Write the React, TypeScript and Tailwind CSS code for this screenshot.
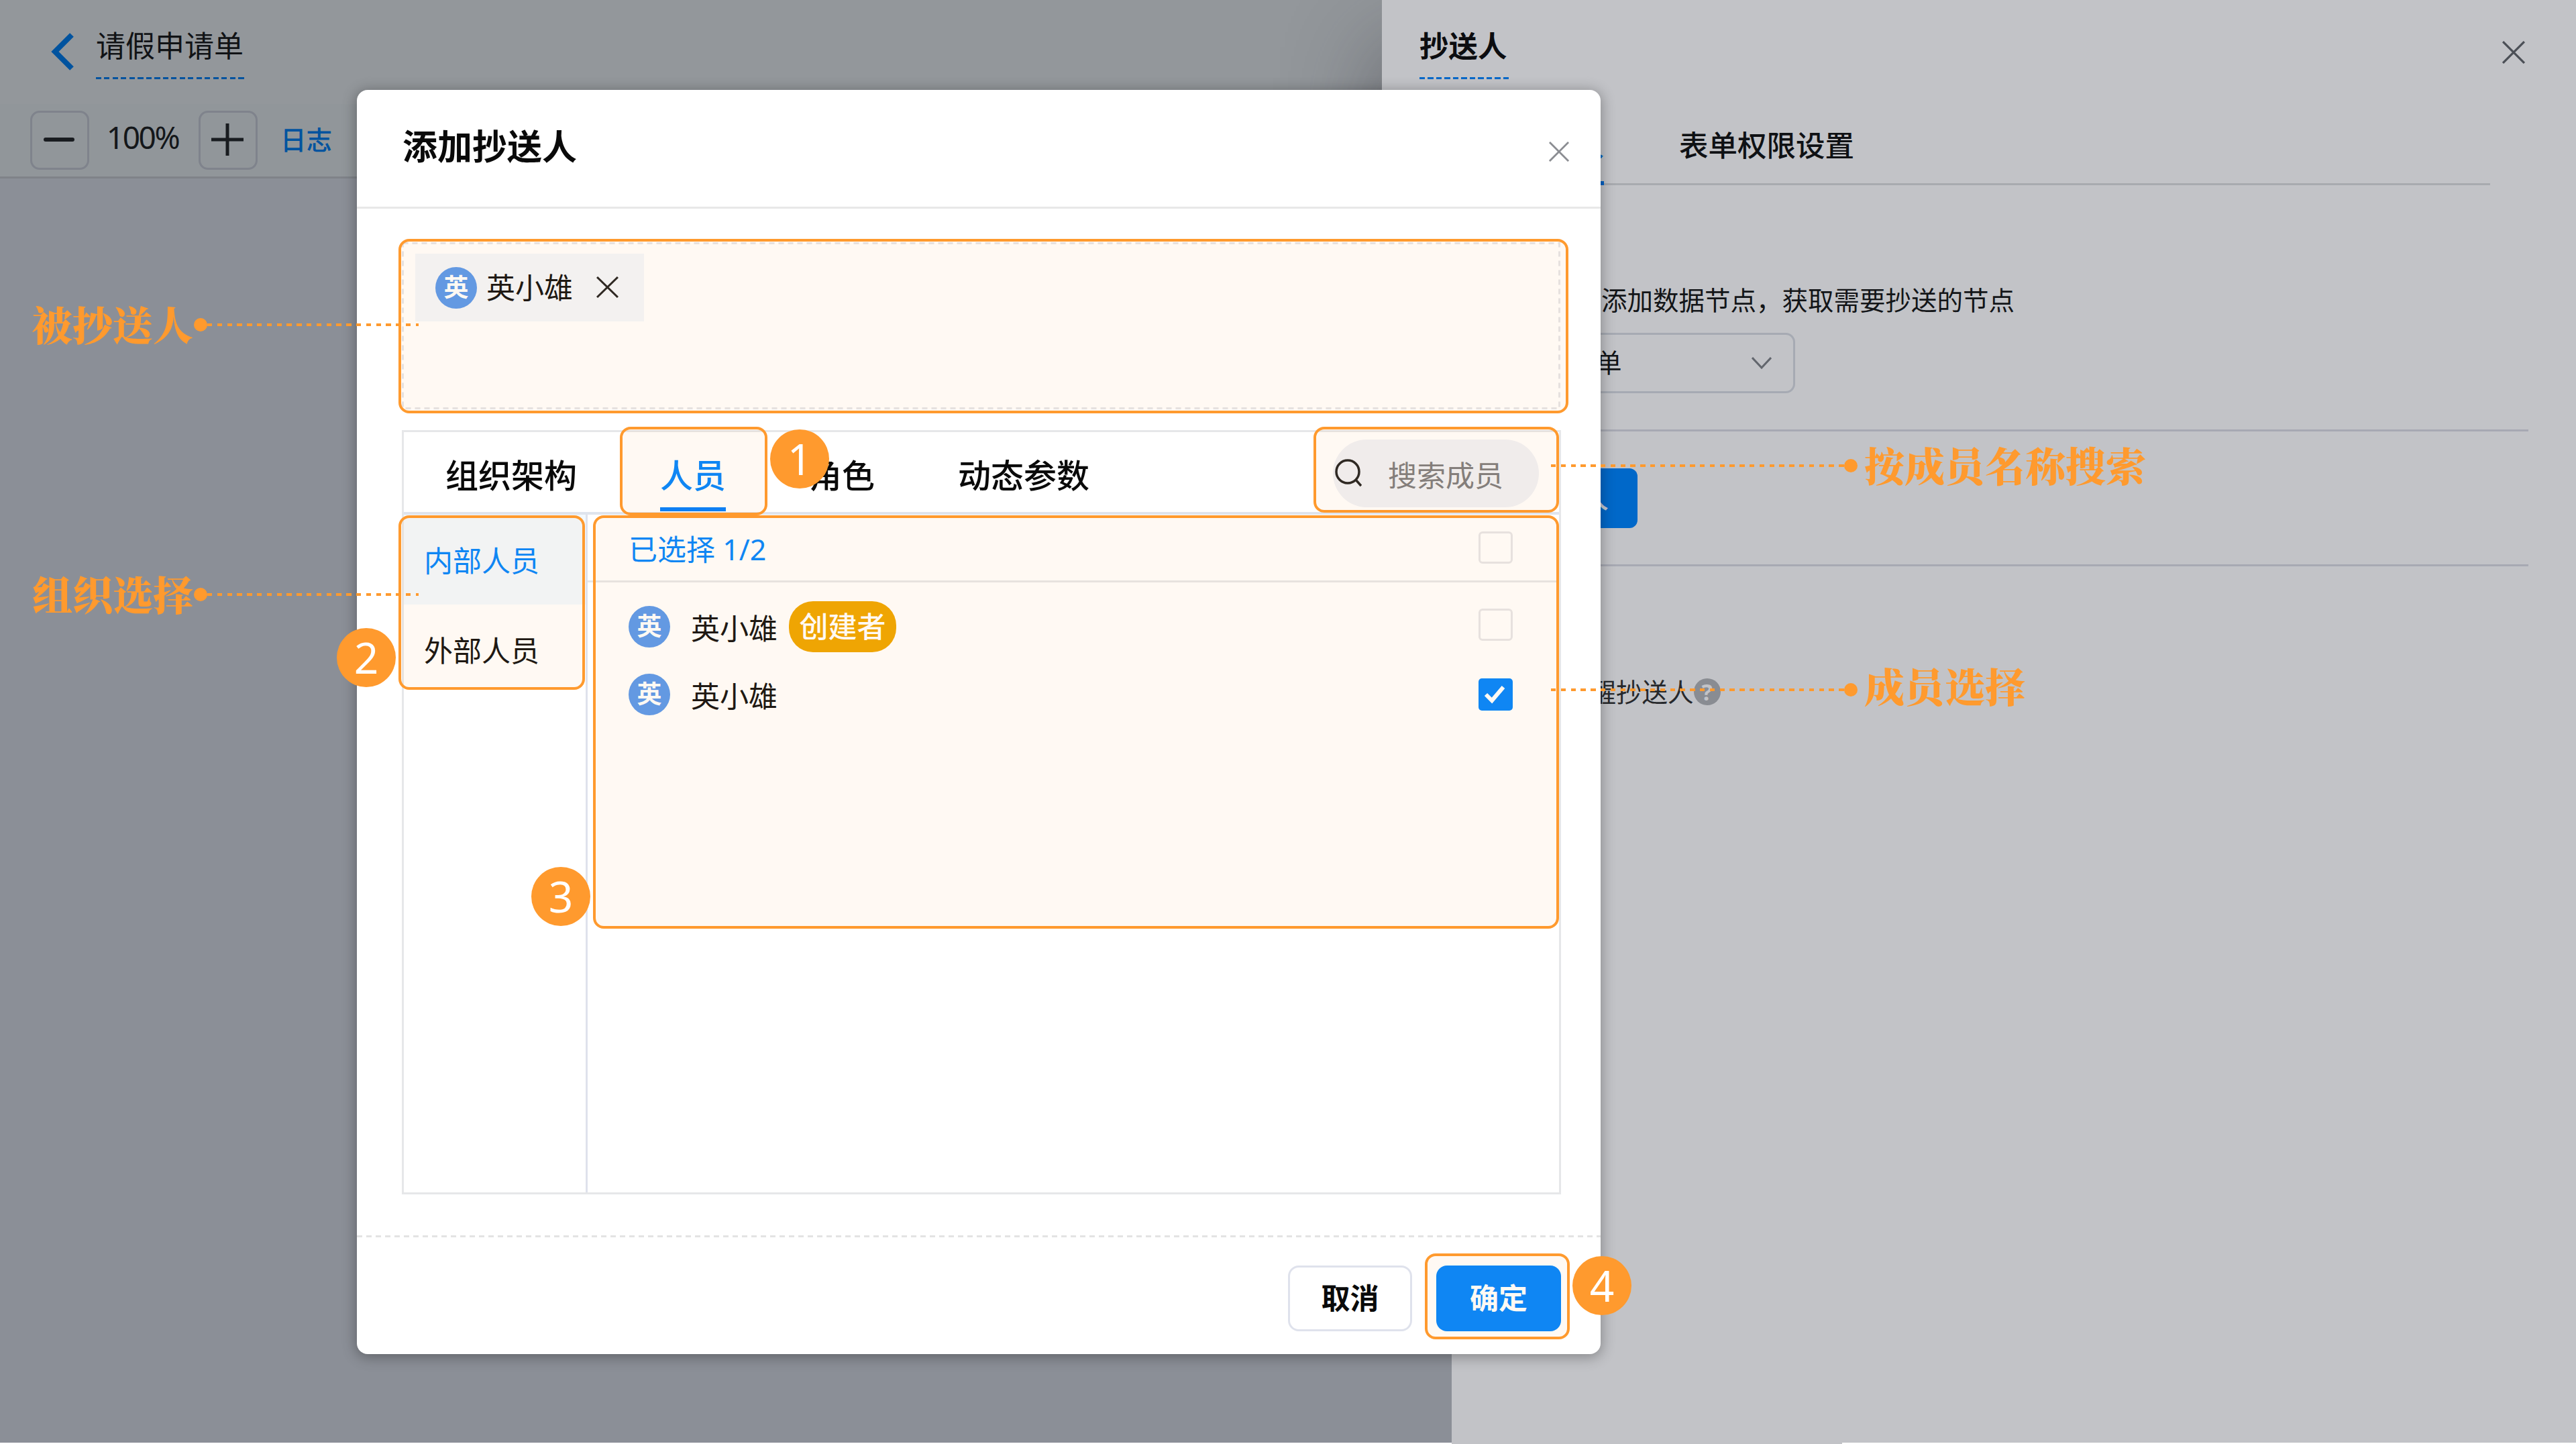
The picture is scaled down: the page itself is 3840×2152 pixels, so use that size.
import React from 'react'
import clsx from 'clsx'

interface Member {
  name: string
  creator?: boolean
  checked?: boolean
}

interface HighlightProps {
  className: string
}

interface CalloutProps {
  label: string
  side: 'left' | 'right'
  className: string
  labelClassName?: string
}

const tabs = ['组织架构', '人员', '角色', '动态参数']

const members: Member[] = [
  { name: '英小雄', creator: true },
  { name: '英小雄', checked: true },
]

function CrossIcon({ className }: { className: string }) {
  return (
    <svg viewBox="0 0 32 32" preserveAspectRatio="none" fill="none" stroke="currentColor" strokeWidth="3" className={className}>
      <path d="M1 1 31 31M31 1 1 31" />
    </svg>
  )
}

function Avatar() {
  return (
    <span className="flex h-[62px] w-[62px] shrink-0 items-center justify-center rounded-full bg-[#5a99ed] pb-[2px] text-[37px] leading-none font-bold text-white">
      英
    </span>
  )
}

function Checkbox({ checked }: { checked?: boolean }) {
  if (checked) {
    return (
      <span className="flex h-12 w-[51px] items-center justify-center rounded-[5px] bg-[#0085ff]">
        <svg viewBox="0 0 51 48" fill="none" stroke="#fff" strokeWidth="6" className="h-12 w-[51px]">
          <path d="M11 24 20 33 37 13" />
        </svg>
      </span>
    )
  }
  return <span className="h-12 w-[51px] rounded-[6px] border-[3px] border-[#e6e6e9]" />
}

function Page() {
  return (
    <div className="flex h-[2150px] w-full flex-col bg-[#8b8f97]">
      <div className="flex h-[155px] items-start bg-[#93979b] pl-[75px]">
        <svg viewBox="0 0 36 56" fill="none" stroke="#00539f" strokeWidth="8" className="mt-[49px] h-14 w-9">
          <path d="M32 3 7 28 32 53" />
        </svg>
        <div className="mt-[38px] ml-[32px]">
          <div className="text-[44px] leading-[60px] text-[#111316]">请假申请单</div>
          <div className="mt-[17px] h-[3px] w-[221px] bg-[repeating-linear-gradient(90deg,#00539f_0_8px,transparent_8px_12.5px)]" />
        </div>
      </div>
      <div className="flex h-[111px] items-center border-b-[3px] border-[#7f8389] bg-[#91969a] pl-[45px]">
        <div className="flex h-[88px] w-[88px] items-center justify-center rounded-[14px] border-[3px] border-[#7f838c] pr-[2px] pb-[2px]">
          <span className="h-[6px] w-[46px] rounded-full bg-[#191c20]" />
        </div>
        <div className="w-[163px] pr-[4px] pb-[10px] text-center text-[46px] leading-none tracking-[-2.4px] text-[#14171a]">100%</div>
        <div className="flex h-[88px] w-[88px] items-center justify-center rounded-[14px] border-[3px] border-[#7f838c] pr-[3px] pb-[3px]">
          <svg viewBox="0 0 48 48" stroke="#191c20" strokeWidth="5" className="h-12 w-12">
            <path d="M0 24H48M24 0V48" />
          </svg>
        </div>
        <div className="ml-[34px] pb-[2px] text-[38.5px] leading-none font-medium text-[#00539f]">日志</div>
      </div>
    </div>
  )
}

function Drawer() {
  return (
    <div className="absolute top-0 right-0 flex h-[2152px] w-[1780px] flex-col items-end">
      <div className="flex h-[1500px] w-full flex-col bg-[#c2c3c7] shadow-[-4px_70px_130px_rgba(40,40,48,0.45)]">
        <div className="flex h-[155px] items-start justify-between pr-[76px] pl-[56px]">
          <div className="mt-[38px]">
            <div className="text-[43.5px] leading-[60px] font-bold text-[#0c0d10]">抄送人</div>
            <div className="mt-[17px] h-[3px] w-[133px] bg-[repeating-linear-gradient(90deg,#0068c9_0_8px,transparent_8px_12.5px)]" />
          </div>
          <CrossIcon className="mt-[61px] h-[34px] w-[34px] text-[#4b4f56]" />
        </div>

        {/* Settings tabs */}
        <div className="mr-[128px] ml-[56px] flex h-[121px] items-start border-b-[3px] border-[#a8aaaf] text-[43.5px] leading-[60px] font-medium">
          <div className="flex h-[121px] w-[275px] flex-col border-b-[6px] border-[#0062c4]">
            <span className="pt-[31px] text-right text-[#0062c4]">抄送人</span>
          </div>
          <span className="mt-[31px] ml-[112px] text-[#0f1114]">表单权限设置</span>
        </div>

        <div className="mr-[71px] ml-[56px] flex h-[367px] flex-col border-b-[3px] border-[#a7a9b3] text-[38.5px] text-[#131518]">
          <div className="mt-[144px] flex h-[56px] w-[887px] items-center justify-end whitespace-nowrap">添加数据节点，获取需要抄送的节点</div>
          <div className="mt-[20px] flex h-[90px] w-[560px] items-center rounded-[14px] border-[3px] border-[#a6aab3] pr-[32px] pl-[106px]">
            <span className="flex-1">请假申请单</span>
            <svg viewBox="0 0 30 18" fill="none" stroke="#62666d" strokeWidth="3" className="h-[18px] w-[30px]">
              <path d="M1 1 15 16 29 1" />
            </svg>
          </div>
        </div>

        <div className="mr-[71px] ml-[56px] flex h-[201px] items-start border-b-[3px] border-[#a7a9b3]">
          <div className="mt-[55px] flex h-[89px] w-[325px] items-center justify-end rounded-[12px] bg-[#0068c9] pr-[43px] text-[43px] font-medium text-[#c3c8d0]">
            人
          </div>
        </div>

        <div className="mt-[166px] ml-[272px] flex h-[42px] items-center text-[38.5px] leading-none text-[#26282b]">
          <span>提醒抄送人</span>
          <span className="flex h-10 w-10 items-center justify-center rounded-full bg-[#898c92] text-[34px] leading-none font-bold text-[#c2c3c7]">
            ?
          </span>
        </div>
      </div>
      <div className="h-[650px] w-[1676px] bg-[#c2c3c7]" />
      <div className="mr-[1094px] h-[2px] w-[582px] bg-[#c2c3c7]" />
    </div>
  )
}

function SelectedMembers() {
  return (
    <div className="relative flex h-[249px] items-start pt-[17px] pl-[20px]">
      <svg className="absolute inset-0 h-full w-full" fill="none">
        <rect x="1.5" y="1.5" width="1724" height="246" stroke="#e5e6ea" strokeWidth="3" strokeDasharray="8 6" />
      </svg>
      <div className="relative flex h-[101px] w-[341px] items-center bg-[#f3f7fc] pl-[30px]">
        <Avatar />
        <span className="ml-[14px] text-[43px] leading-none text-[#111]">英小雄</span>
        <CrossIcon className="mb-[2px] ml-[35px] h-[32px] w-[33px] text-[#222]" />
      </div>
    </div>
  )
}

function MemberPicker() {
  return (
    <div className="mt-[31px] flex h-[1139px] flex-col border-[3px] border-[#e6e7e9]">
      <div className="flex h-[123px] shrink-0 border-b-4 border-[#dfe4ed] pl-[62px]">
        {tabs.map((tab) => (
          <div key={tab} className="mr-[124px] flex w-max flex-col pt-[34px]">
            <span className={clsx('text-[49px] leading-[60px] font-medium', tab === '人员' ? 'text-[#0085ff]' : 'text-[#0a0a0a]')}>
              {tab}
            </span>
            <span className={clsx('mt-[18px] h-[6px]', tab === '人员' && 'bg-[#007eff]')} />
          </div>
        ))}
        <div className="mt-[11px] mr-[30px] ml-auto flex h-[101px] w-[307px] items-center rounded-full bg-[#f0f2f7] pl-[3px]">
          <svg viewBox="0 0 40 42" fill="none" stroke="#222" strokeWidth="3.5" className="mb-[2px] h-[42px] w-[40px]">
            <circle cx="19" cy="19" r="17" />
            <path d="M31 31 39 40" />
          </svg>
          <span className="ml-[39px] pt-[5px] text-[43px] leading-none text-[#7d7d80]">搜索成员</span>
        </div>
      </div>

      <div className="flex flex-1">
        {/* Organisation list */}
        <div className="flex w-[274px] flex-col border-r-[3px] border-[#dfe2ec] text-[43px] leading-none">
          <div className="flex h-[134px] items-center bg-[#f2f9ff] pt-[2px] pl-[30px] text-[#0085ff]">内部人员</div>
          <div className="flex h-[137px] items-center pl-[30px] text-[#111]">外部人员</div>
        </div>

        <div className="flex flex-1 flex-col text-[43px] leading-none">
          <div className="flex h-[101px] items-center justify-between border-b-[3px] border-[#e6e7e9] pr-[69px] pl-[61px]">
            <span className="pt-[5px] text-[#0085ff]">已选择 1/2</span>
            <Checkbox />
          </div>
          <div className="pt-[15px]">
            {members.map((member, i) => (
              <div key={i} className="flex h-[101px] items-center pr-[69px] pl-[61px]">
                <Avatar />
                <span className="ml-[31px] pt-[5px] text-[#111]">{member.name}</span>
                {member.creator && (
                  <span className="ml-[17px] flex h-[76px] w-[160px] items-center justify-center rounded-[36px] bg-[#efa601] font-medium text-white">
                    创建者
                  </span>
                )}
                <span className={clsx('ml-auto flex', !member.checked && 'mb-[5px]')}>
                  <Checkbox checked={member.checked} />
                </span>
              </div>
            ))}
          </div>
        </div>
      </div>
    </div>
  )
}

function Modal() {
  return (
    <div className="absolute top-[134px] left-[532px] flex h-[1884px] w-[1854px] flex-col rounded-[16px] bg-white shadow-[0_3px_20px_2px_rgba(0,0,0,0.3)]">
      <div className="flex h-[177px] shrink-0 items-center justify-between border-b-[3px] border-[#e8e8e8] pr-[47px] pl-[68px]">
        <span className="pb-[6px] text-[52px] leading-none font-bold text-[#0a0a0a]">添加抄送人</span>
        <CrossIcon className="mt-[10px] h-[30px] w-[30px] text-[#8b8d92]" />
      </div>
      <div className="pt-[50px] pr-[59px] pl-[67px]">
        <SelectedMembers />
        <MemberPicker />
      </div>
      <div className="mt-[61px] h-[3px] bg-[repeating-linear-gradient(90deg,#e3e3e3_0_8px,transparent_8px_14px)]" />
      <div className="flex justify-end gap-[36px] pt-[42px] pr-[59px] text-[43px] leading-none">
        <button className="h-[98px] w-[185px] rounded-[16px] border-[3px] border-[#dfe2ec] pb-[2px] font-bold text-[#0a0a0a]">取消</button>
        <button className="h-[98px] w-[186px] rounded-[16px] bg-[#0085ff] pb-[2px] font-bold text-white">确定</button>
      </div>
    </div>
  )
}

function Highlight({ className }: HighlightProps) {
  return <div className={clsx('absolute rounded-[16px] border-4 border-[#ff9a2e] bg-[#ff9a2e]/6', className)} />
}

function Step({ n, className }: { n: number; className: string }) {
  return (
    <div className={clsx('absolute flex h-[88px] w-[88px] items-center justify-center rounded-full bg-[#ff9a2e] text-[64px] leading-none text-white', className)}>
      {n}
    </div>
  )
}

function Callout({ label, side, className, labelClassName = 'pb-[4px]' }: CalloutProps) {
  return (
    <div className={clsx('absolute flex h-[80px] items-center', side === 'right' && 'flex-row-reverse', className)}>
      <span
        className={clsx(
          "font-['Noto_Serif_CJK_SC','Noto_Sans_CJK_SC',serif] text-[60px] leading-[80px] font-black whitespace-nowrap text-[#ff9a2e]",
          labelClassName,
        )}
      >
        {label}
      </span>
      <span className={clsx('h-5 w-5 rounded-full bg-[#ff9a2e]', side === 'left' ? 'ml-px' : 'mr-[10px]')} />
      <span
        className={clsx(
          'h-1 bg-[repeating-linear-gradient(90deg,#ff9a2e_0_7.4px,transparent_7.4px_14.8px)]',
          side === 'left' ? 'w-[315px]' : 'w-[437px]',
        )}
      />
    </div>
  )
}

function Annotations() {
  return (
    <>
      <Highlight className="top-[356px] left-[594px] h-[260px] w-[1744px]" />
      <Highlight className="top-[636px] left-[924px] h-[132px] w-[220px]" />
      <Highlight className="top-[636px] left-[1958px] h-[128px] w-[366px]" />
      <Highlight className="top-[768px] left-[594px] h-[260px] w-[278px]" />
      <Highlight className="top-[768px] left-[884px] h-[616px] w-[1440px]" />
      <Highlight className="top-[1868px] left-[2124px] h-[128px] w-[216px]" />

      <Callout label="被抄送人" side="left" className="top-[444px] left-[48px]" />
      <Callout label="组织选择" side="left" className="top-[846px] left-[48px]" />
      <Callout label="按成员名称搜索" side="right" className="top-[654px] left-[2312px]" />
      <Callout label="成员选择" side="right" className="top-[988px] left-[2312px]" labelClassName="pb-[14px]" />

      <Step n={1} className="top-[640px] left-[1148px]" />
      <Step n={2} className="top-[936px] left-[502px]" />
      <Step n={3} className="top-[1292px] left-[792px]" />
      <Step n={4} className="top-[1872px] left-[2344px]" />
    </>
  )
}

export default function App() {
  return (
    <div className="relative h-[2152px] w-[3840px] overflow-hidden bg-white font-['Noto_Sans','Noto_Sans_CJK_SC',sans-serif]">
      <Page />
      <Drawer />
      <Modal />
      <Annotations />
    </div>
  )
}
